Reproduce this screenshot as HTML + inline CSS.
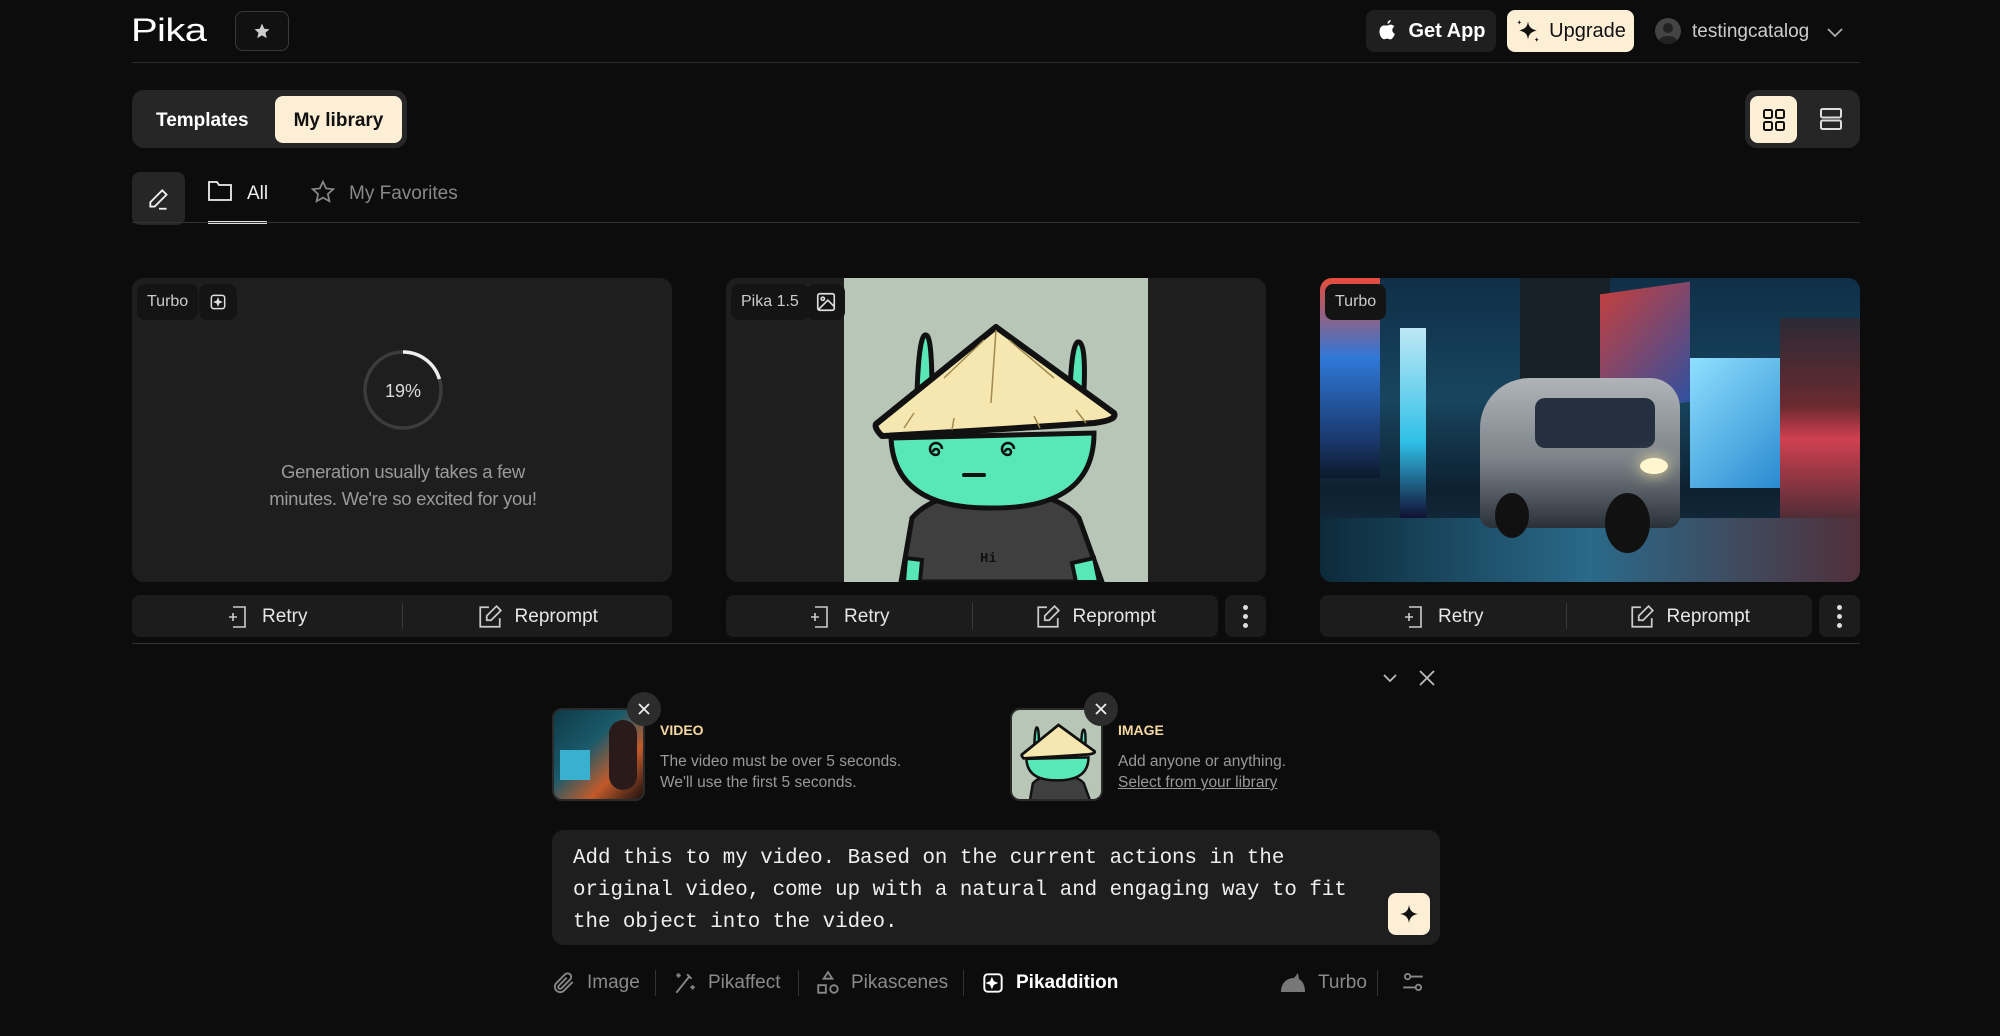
<!DOCTYPE html>
<html><head><meta charset="utf-8"><style>
*{box-sizing:border-box;margin:0;padding:0}
body{width:2000px;height:1036px;background:#0c0c0c;font-family:"Liberation Sans",sans-serif;color:#fff;position:relative;overflow:hidden}
.a{position:absolute}
.btn{position:absolute;display:flex;align-items:center;justify-content:center;border-radius:8px}
.card{position:absolute;top:278px;height:304px;width:540px;background:#1e1e1e;border-radius:12px;overflow:hidden}
.bar{position:absolute;top:595px;height:42px;background:#1c1c1c;border-radius:8px;display:flex;align-items:center;font-size:19px;color:#e6e6e6}
.bar .h{flex:1;display:flex;align-items:center;justify-content:center;gap:12px;padding-top:2px}
.bar .sep{width:1px;height:26px;background:#3a3a3a}
.dots{position:absolute;top:595px;height:42px;width:41px;background:#1c1c1c;border-radius:8px}
.dots i{position:absolute;left:18px;width:5px;height:5px;border-radius:50%;background:#ddd}
.tag{position:absolute;top:284px;height:36px;background:#141414;border-radius:8px;font-size:16px;color:#ccc;display:flex;align-items:center;padding:0 10px}
.tb{position:absolute;top:970px;font-size:19px;color:#8a8a8a;display:flex;align-items:center;gap:10px}
</style></head><body>
<!-- header -->
<div class="a" style="left:131px;top:12px;font-size:32px;letter-spacing:-0.5px;transform:scaleX(1.25);transform-origin:left">Pika</div>
<div class="btn" style="left:235px;top:11px;width:54px;height:40px;border:1.5px solid #3a3a3a;background:#111">
<svg width="18" height="18" viewBox="0 0 24 24"><path d="M12 2l3 7 7 .6-5.3 4.7 1.6 7.2L12 17.8 5.7 21.5l1.6-7.2L2 9.6 9 9z" fill="#ccc"/></svg></div>
<div class="a" style="left:132px;top:62px;width:1728px;height:1px;background:#2e2e2e"></div>
<div class="btn" style="left:1366px;top:10px;width:130px;height:42px;background:#1f1f1f;font-weight:bold;font-size:20px;gap:10px">
<svg width="22" height="26" viewBox="0 0 24 28"><path d="M16 2c0 2-1.5 4-3.5 4 0-2 1.6-4 3.5-4zM12 8c1.5 0 2.5-.9 4-.9 1.4 0 3 .7 4 2.1-3.3 1.8-2.8 6.6.6 7.8-.7 2-1.9 4.6-3.6 5.7-1.3.9-2.6.3-4-.2-1.5-.5-2.7.4-4 .5-2.9 0-6-5.6-5-10.4.5-2.8 2.6-4.8 4.8-4.8C10 7.8 11 8 12 8z" fill="#fff"/></svg>Get App</div>
<div class="btn" style="left:1507px;top:10px;width:127px;height:42px;background:#fcefd6;color:#111;font-size:20px;gap:8px">
<svg width="26" height="26" viewBox="0 0 24 24"><path d="M12 3c.6 5 2.5 7 8 8.5-5.5 1.5-7.4 3.5-8 8.5-.6-5-2.5-7-8-8.5C9.5 10 11.4 8 12 3z" fill="#111"/><path d="M4 2l.6 1.6L6 4l-1.4.5L4 6l-.6-1.5L2 4l1.4-.4zM20 18l.6 1.5 1.4.5-1.4.5L20 22l-.6-1.5L18 20l1.4-.5z" fill="#111"/></svg>Upgrade</div>
<div class="a" style="left:1655px;top:18px;width:26px;height:26px;border-radius:50%;background:#444;overflow:hidden"><div class="a" style="left:8px;top:5px;width:10px;height:10px;border-radius:50%;background:#222"></div><div class="a" style="left:3px;top:18px;width:20px;height:14px;border-radius:50%;background:#222"></div></div>
<div class="a" style="left:1692px;top:21px;font-size:19px;color:#ccc">testingcatalog</div>
<svg class="a" style="left:1826px;top:25px" width="18" height="14" viewBox="0 0 18 14"><path d="M2 4l7 7 7-7" stroke="#aaa" stroke-width="1.8" fill="none"/></svg>
<!-- tabs -->
<div class="a" style="left:132px;top:90px;width:275px;height:58px;background:#262626;border-radius:12px"></div>
<div class="a" style="left:156px;top:110px;font-size:19px;font-weight:bold">Templates</div>
<div class="btn" style="left:275px;top:96px;width:127px;height:47px;background:#fcefd6;color:#111;font-weight:bold;font-size:19px;padding-top:2px">My library</div>
<div class="a" style="left:1745px;top:90px;width:115px;height:58px;background:#262626;border-radius:12px"></div>
<div class="btn" style="left:1750px;top:96px;width:47px;height:47px;background:#fcefd6">
<svg width="26" height="26" viewBox="0 0 26 26" fill="none" stroke="#111" stroke-width="2"><rect x="3" y="3" width="8" height="8" rx="1.5"/><rect x="15" y="3" width="8" height="8" rx="1.5"/><rect x="3" y="15" width="8" height="8" rx="1.5"/><rect x="15" y="15" width="8" height="8" rx="1.5"/></svg></div>
<svg class="a" style="left:1818px;top:106px" width="26" height="26" viewBox="0 0 26 26" fill="none" stroke="#ddd" stroke-width="2"><rect x="3" y="3" width="20" height="8.5" rx="1.5"/><rect x="3" y="14.5" width="20" height="8.5" rx="1.5"/></svg>
<!-- filter row -->
<div class="btn" style="left:132px;top:172px;width:53px;height:53px;background:#262626">
<svg width="26" height="26" viewBox="0 0 24 24" fill="none" stroke="#eee" stroke-width="1.7"><path d="M15 4l4 4L8 19H4v-4z"/><path d="M12 21h7"/></svg></div>
<svg class="a" style="left:207px;top:179px" width="26" height="24" viewBox="0 0 26 24" fill="none" stroke="#eee" stroke-width="1.8"><path d="M2 3h8l2 3h12v15H2z"/></svg>
<div class="a" style="left:247px;top:183px;font-size:19px;color:#eee">All</div>
<div class="a" style="left:208px;top:221px;width:59px;height:3px;background:#ddd"></div>
<svg class="a" style="left:310px;top:179px" width="26" height="26" viewBox="0 0 24 24" fill="none" stroke="#888" stroke-width="1.6"><path d="M12 2.5l2.9 6.2 6.6.7-5 4.5 1.4 6.6L12 17.2l-5.9 3.3 1.4-6.6-5-4.5 6.6-.7z"/></svg>
<div class="a" style="left:349px;top:183px;font-size:19px;color:#888">My Favorites</div>
<div class="a" style="left:132px;top:222px;width:1728px;height:1px;background:#333"></div>
<!-- card 1 -->
<div class="card" style="left:132px"></div>
<div class="tag" style="left:137px">Turbo</div>
<div class="btn" style="left:199px;top:284px;width:38px;height:36px;background:#141414"><svg width="20" height="20" viewBox="0 0 24 24" fill="none" stroke="#ddd" stroke-width="1.8"><rect x="4" y="4" width="16" height="16" rx="3"/><path d="M12 8.5l1 2.5 2.5 1-2.5 1-1 2.5-1-2.5-2.5-1 2.5-1z" fill="#ddd"/></svg></div>
<svg class="a" style="left:361px;top:348px" width="84" height="84" viewBox="0 0 84 84"><circle cx="42" cy="42" r="38" stroke="#3c3c3c" stroke-width="3.5" fill="none"/><path d="M42 4 A38 38 0 0 1 78.4 31" stroke="#eee" stroke-width="3.5" fill="none"/></svg>
<div class="a" style="left:361px;top:381px;width:84px;text-align:center;font-size:18px;color:#ddd">19%</div>
<div class="a" style="left:253px;top:458px;width:300px;text-align:center;font-size:18.5px;line-height:27px;color:#9a9a9a;letter-spacing:-0.3px">Generation usually takes a few minutes. We're so excited for you!</div>
<!-- card 2 -->
<div class="card" style="left:726px">
<svg class="a" style="left:118px;top:0" width="304" height="304" viewBox="0 0 304 304">
<rect width="304" height="304" fill="#b8c6b8"/>
<path d="M57 304 L68 240 Q90 214 150 212 Q215 214 235 240 L258 304Z" fill="#3f3f3f" stroke="#111" stroke-width="5"/>
<path d="M47 160 Q50 232 150 230 Q250 230 250 155Z" fill="#58e8b8" stroke="#111" stroke-width="5"/>
<path d="M60 304 L62 280 L78 282 L76 304Z M228 285 L250 280 L255 304 L232 304Z" fill="#58e8b8" stroke="#111" stroke-width="4"/>
<path d="M73 115 Q75 55 82 57 Q88 57 88 115Z M226 112 Q228 62 235 64 Q242 66 240 112Z" fill="#58e8b8" stroke="#111" stroke-width="5"/>
<path d="M152 49 L270 135 Q274 142 250 145 Q150 152 38 158 Q30 150 32 146Z" fill="#f6e6b0" stroke="#111" stroke-width="6" stroke-linejoin="round"/>
<path d="M152 52 L147 125 M140 62 L100 100 M165 62 L210 100 M70 135 L60 150 M110 140 L108 152 M190 138 L196 150 M232 132 L242 145" stroke="#a08a50" stroke-width="1.5"/>
<path d="M92 174 m-3 0 a3 3 0 1 1 3 3 a6 6 0 1 1 6-6" fill="none" stroke="#111" stroke-width="2.5"/>
<path d="M164 174 m-3 0 a3 3 0 1 1 3 3 a6 6 0 1 1 6-6" fill="none" stroke="#111" stroke-width="2.5"/>
<path d="M120 197 h20" stroke="#111" stroke-width="4" stroke-linecap="round"/>
<text x="136" y="284" font-size="14" font-weight="bold" fill="#111" font-family="Liberation Mono">Hi</text>
</svg></div>
<div class="tag" style="left:731px">Pika 1.5</div>
<div class="btn" style="left:807px;top:284px;width:38px;height:36px;background:#141414"><svg width="22" height="22" viewBox="0 0 24 24" fill="none" stroke="#ddd" stroke-width="1.8"><rect x="3" y="3" width="18" height="18" rx="2"/><circle cx="8.5" cy="8.5" r="1.8"/><path d="M4 20l10-10 7 7"/></svg></div>
<!-- card 3 -->
<div class="card" style="left:1320px;background:linear-gradient(180deg,#0f2f48 0%,#18455e 40%,#0d2030 70%,#1b3848 100%)">
<div class="a" style="left:0;top:0;width:60px;height:200px;background:linear-gradient(180deg,#e84c3a,#2f78d8 40%,#1a3a70 80%,#0c1a2a)"></div>
<div class="a" style="left:80px;top:50px;width:26px;height:190px;background:linear-gradient(180deg,#bfe8f5,#2fc0e8 60%,#113)"></div>
<div class="a" style="left:200px;top:0;width:90px;height:150px;background:#182028"></div>
<div class="a" style="left:280px;top:10px;width:90px;height:120px;background:linear-gradient(135deg,#c04040,#3050a0);transform:skewY(-8deg)"></div>
<div class="a" style="left:370px;top:80px;width:90px;height:130px;background:linear-gradient(135deg,#8fe0ff,#2a8ad0)"></div>
<div class="a" style="left:460px;top:40px;width:80px;height:220px;background:linear-gradient(180deg,#2a2a35,#6a2a30 40%,#d04050 55%,#302830)"></div>
<div class="a" style="left:0;top:240px;width:540px;height:64px;background:linear-gradient(90deg,#0c2a3a,#2a6a8a 50%,#50303a)"></div>
<div class="a" style="left:160px;top:100px;width:200px;height:150px;border-radius:50px 30px 12px 12px;background:linear-gradient(180deg,#b0b4b8,#7a8288 55%,#2a3038)"></div>
<div class="a" style="left:215px;top:120px;width:120px;height:50px;border-radius:10px;background:#243040"></div>
<div class="a" style="left:320px;top:180px;width:28px;height:16px;border-radius:50%;background:#fff6d0;box-shadow:0 0 16px #ffe9a0"></div>
<div class="a" style="left:175px;top:215px;width:34px;height:45px;border-radius:50%;background:#111"></div>
<div class="a" style="left:285px;top:215px;width:45px;height:60px;border-radius:50%;background:#111"></div>
</div>
<div class="tag" style="left:1325px">Turbo</div>
<!-- bars -->
<div class="bar" style="left:132px;width:540px"><div class="h"><svg width="24" height="26" viewBox="0 0 24 26" fill="none" stroke="#ccc" stroke-width="1.6"><path d="M7 3h12v20H7"/><path d="M3 13h8M7 9v8"/></svg>Retry</div><div class="sep"></div><div class="h"><svg width="26" height="26" viewBox="0 0 24 24" fill="none" stroke="#ccc" stroke-width="1.6"><path d="M11 3H3v18h18v-8"/><path d="M18 2l4 4-9 9H9v-4z"/></svg>Reprompt</div></div>
<div class="bar" style="left:726px;width:492px"><div class="h"><svg width="24" height="26" viewBox="0 0 24 26" fill="none" stroke="#ccc" stroke-width="1.6"><path d="M7 3h12v20H7"/><path d="M3 13h8M7 9v8"/></svg>Retry</div><div class="sep"></div><div class="h"><svg width="26" height="26" viewBox="0 0 24 24" fill="none" stroke="#ccc" stroke-width="1.6"><path d="M11 3H3v18h18v-8"/><path d="M18 2l4 4-9 9H9v-4z"/></svg>Reprompt</div></div>
<div class="dots" style="left:1225px"><i style="top:10px"></i><i style="top:19px"></i><i style="top:28px"></i></div>
<div class="bar" style="left:1320px;width:492px"><div class="h"><svg width="24" height="26" viewBox="0 0 24 26" fill="none" stroke="#ccc" stroke-width="1.6"><path d="M7 3h12v20H7"/><path d="M3 13h8M7 9v8"/></svg>Retry</div><div class="sep"></div><div class="h"><svg width="26" height="26" viewBox="0 0 24 24" fill="none" stroke="#ccc" stroke-width="1.6"><path d="M11 3H3v18h18v-8"/><path d="M18 2l4 4-9 9H9v-4z"/></svg>Reprompt</div></div>
<div class="dots" style="left:1819px"><i style="top:10px"></i><i style="top:19px"></i><i style="top:28px"></i></div>
<div class="a" style="left:132px;top:643px;width:1728px;height:1px;background:#333"></div>
<!-- composer -->
<svg class="a" style="left:1380px;top:670px" width="20" height="16" viewBox="0 0 20 16"><path d="M4 5l6 6 6-6" stroke="#bbb" stroke-width="1.8" fill="none"/></svg>
<svg class="a" style="left:1418px;top:669px" width="18" height="18" viewBox="0 0 18 18"><path d="M2 2l14 14M16 2L2 16" stroke="#bbb" stroke-width="1.8"/></svg>
<div class="a" style="left:552px;top:708px;width:93px;height:93px;border-radius:10px;border:2px solid #2a2a2a;background:linear-gradient(135deg,#0f3a48,#1a5a6a 40%,#c25a2a 70%,#1a1010);overflow:hidden"><div class="a" style="left:6px;top:40px;width:30px;height:30px;background:#3ab0d0"></div><div class="a" style="left:55px;top:10px;width:28px;height:70px;border-radius:14px;background:#2a1a1a"></div></div>
<div class="btn" style="left:627px;top:692px;width:34px;height:34px;border-radius:50%;background:#2c2c2c"><svg width="14" height="14" viewBox="0 0 14 14"><path d="M2 2l10 10M12 2L2 12" stroke="#eee" stroke-width="1.8"/></svg></div>
<div class="a" style="left:660px;top:722px;font-size:14px;font-weight:bold;color:#f5d9a0">VIDEO</div>
<div class="a" style="left:660px;top:751px;font-size:15.5px;line-height:21px;color:#999">The video must be over 5 seconds.<br>We'll use the first 5 seconds.</div>
<div class="a" style="left:1010px;top:708px;width:93px;height:93px;border-radius:10px;border:2px solid #2a2a2a;background:#b8c6b8;overflow:hidden">
<svg width="93" height="93" viewBox="0 0 304 304"><path d="M57 304 L68 240 Q90 214 150 212 Q215 214 235 240 L258 304Z" fill="#3f3f3f" stroke="#111" stroke-width="8"/><path d="M47 160 Q50 232 150 230 Q250 230 250 155Z" fill="#58e8b8" stroke="#111" stroke-width="8"/><path d="M73 115 Q75 55 82 57 Q88 57 88 115Z M226 112 Q228 62 235 64 Q242 66 240 112Z" fill="#58e8b8" stroke="#111" stroke-width="8"/><path d="M152 49 L270 135 Q274 142 250 145 Q150 152 38 158 Q30 150 32 146Z" fill="#f6e6b0" stroke="#111" stroke-width="9"/></svg></div>
<div class="btn" style="left:1084px;top:692px;width:34px;height:34px;border-radius:50%;background:#2c2c2c"><svg width="14" height="14" viewBox="0 0 14 14"><path d="M2 2l10 10M12 2L2 12" stroke="#eee" stroke-width="1.8"/></svg></div>
<div class="a" style="left:1118px;top:722px;font-size:14px;font-weight:bold;color:#f5d9a0">IMAGE</div>
<div class="a" style="left:1118px;top:751px;font-size:15.5px;line-height:21px;color:#999">Add anyone or anything.<br><span style="text-decoration:underline">Select from your library</span></div>
<div class="a" style="left:552px;top:830px;width:888px;height:115px;background:#1e1e1e;border-radius:12px"></div>
<div class="a" style="left:573px;top:843px;font-family:'Liberation Mono',monospace;font-size:20.8px;line-height:32px;color:#eee;white-space:pre">Add this to my video. Based on the current actions in the
original video, come up with a natural and engaging way to fit
the object into the video.</div>
<div class="btn" style="left:1388px;top:893px;width:42px;height:42px;background:#fcefd6"><svg width="22" height="22" viewBox="0 0 24 24"><path d="M12 2c.7 6 3.5 9 10 10-6.5 1-9.3 4-10 10-.7-6-3.5-9-10-10 6.5-1 9.300-4 10-10z" fill="#111"/></svg></div>
<!-- toolbar -->
<div class="tb" style="left:551px"><svg width="26" height="26" viewBox="0 0 24 24" fill="none" stroke="#888" stroke-width="1.7"><path d="M20 11l-8.5 8.5a5 5 0 01-7-7L13 4a3.3 3.3 0 014.7 4.7L9.5 17a1.7 1.7 0 01-2.4-2.4L14.5 7"/></svg>Image</div>
<div class="a" style="left:655px;top:970px;width:1px;height:26px;background:#333"></div>
<div class="tb" style="left:672px"><svg width="26" height="26" viewBox="0 0 24 24" fill="none" stroke="#888" stroke-width="1.7"><path d="M4 21L16 6M14 4l4 4M6 3v4M4 5h4M19 14v4M17 16h4"/></svg>Pikaffect</div>
<div class="a" style="left:798px;top:970px;width:1px;height:26px;background:#333"></div>
<div class="tb" style="left:815px"><svg width="26" height="26" viewBox="0 0 24 24" fill="none" stroke="#888" stroke-width="1.7"><path d="M12 2l4 6H8z"/><rect x="3" y="14" width="7" height="7"/><circle cx="17.5" cy="17.5" r="3.5"/></svg>Pikascenes</div>
<div class="a" style="left:963px;top:970px;width:1px;height:26px;background:#333"></div>
<div class="tb" style="left:980px;color:#fff;font-weight:bold"><svg width="26" height="26" viewBox="0 0 24 24" fill="none" stroke="#fff" stroke-width="1.8"><rect x="4" y="4" width="16" height="16" rx="3"/><path d="M11 8.5l1 2.5 2.5 1-2.5 1-1 2.5-1-2.5-2.5-1 2.5-1z" fill="#fff"/></svg>Pikaddition</div>
<div class="tb" style="left:1278px"><svg width="30" height="26" viewBox="0 0 30 26"><path d="M3 22c0-8 5-14 13-14l4-5 1 6c4 2 6 7 6 13z" fill="#777"/></svg>Turbo</div>
<div class="a" style="left:1377px;top:970px;width:1px;height:26px;background:#333"></div>
<svg class="a" style="left:1400px;top:969px" width="26" height="26" viewBox="0 0 24 24" fill="none" stroke="#888" stroke-width="1.7"><circle cx="7" cy="7" r="2.5"/><path d="M10 7h11M3 17h11"/><circle cx="17" cy="17" r="2.5"/></svg>
</body></html>
